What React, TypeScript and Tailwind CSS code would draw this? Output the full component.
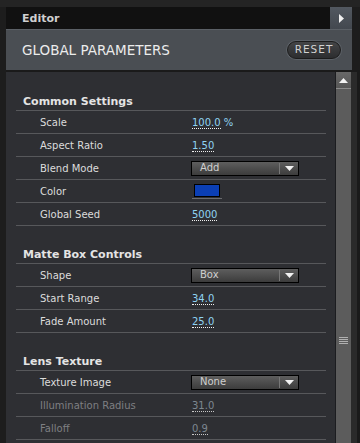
import React from "react";

const font = { fontFamily: '"DejaVu Sans", Verdana, sans-serif' };

function Val({ v, unit, dim }: { v: string; unit?: string; dim?: boolean }) {
  return (
    <span className={dim ? "text-[#7d8790]" : "text-[#8fd3f2]"}>
      <span className={`border-b border-dotted leading-[11px] inline-block ${dim ? "border-[#c8c8c8]" : "border-[#f0f0f0]"}`}>{v}</span>
      {unit ? <span> {unit}</span> : null}
    </span>
  );
}

function Drop({ label }: { label: string }) {
  return (
    <div className="ml-[-1px] w-[108px] h-[15px] border border-black bg-gradient-to-b from-[#5e5e5e] to-[#3c3c3c] flex items-center">
      <span className="flex-1 pl-[8px] text-[#cfcfcf] text-[10px] leading-none">{label}</span>
      <div className="w-px h-[11px] bg-[#1a1a1a] border-r border-[#777]" />
      <div className="w-[18px] flex justify-center">
        <svg width="9" height="5" viewBox="0 0 9 5"><path d="M0 0H9L4.5 5Z" fill="#f2f2f2" /></svg>
      </div>
    </div>
  );
}

function Row({ label, children, dim }: { label: string; children: React.ReactNode; dim?: boolean }) {
  return (
    <div className="h-[23px] flex items-center border-b border-[#57585b] text-[10px]">
      <div className={`w-[176px] pl-[24px] ${dim ? "text-[#7e7f82]" : "text-[#dcdcdc]"}`}>{label}</div>
      <div className="flex items-center">{children}</div>
    </div>
  );
}

function Heading({ title }: { title: string }) {
  return (
    <div className="h-[38px] flex items-end pb-[3px] pl-[7px] border-b border-[#57585b]">
      <span className="text-[11px] font-bold text-[#e4e4e4] leading-none">{title}</span>
    </div>
  );
}

export default function App() {
  return (
    <div className="w-[360px] h-[443px] bg-[#1d1d1d] overflow-hidden flex flex-col" style={font}>
      <div className="h-[7px] bg-[#242424]" />
      <div className="h-[22px] flex ml-[6px] mr-[8px]">
        <div className="flex-1 bg-[#111111] flex items-center pl-[16px] pt-[2px]">
          <span className="text-[11px] font-bold text-[#cfcfcf]">Editor</span>
        </div>
        <div className="w-[22px] bg-gradient-to-b from-[#525860] to-[#43484f] flex items-center justify-center">
          <svg width="5" height="9" viewBox="0 0 5 9"><path d="M0 0L5 4.5L0 9Z" fill="#f0f0f0" /></svg>
        </div>
      </div>
      <div className="h-[41px] ml-[6px] mr-[8px] bg-[#4a4e53] border-t border-[#5b6066] flex items-center justify-between pl-[16px] pr-[10px]">
        <span className="text-[13.5px] text-[#ececec]">GLOBAL PARAMETERS</span>
        <div className="rounded-full p-px bg-[#5c6167]">
          <div className="rounded-full w-[54px] h-[18px] bg-gradient-to-b from-[#444547] to-[#2c2d2f] border border-[#1c1c1c] flex items-center justify-center text-[10.5px] tracking-[1px] text-[#d2d2d2]">
            RESET
          </div>
        </div>
      </div>
      <div className="h-[2px] bg-[#1a1a1a] ml-[6px]" />
      <div className="flex flex-1 ml-[6px] min-h-0">
        <div className="flex-1 bg-[#2e2f33] pt-px pl-[10px] pr-[9px] border-r border-[#1c1d20]">
          <Heading title="Common Settings" />
          <Row label="Scale"><Val v="100.0" unit="%" /></Row>
          <Row label="Aspect Ratio"><Val v="1.50" /></Row>
          <Row label="Blend Mode"><Drop label="Add" /></Row>
          <Row label="Color">
            <div className="flex flex-col items-center">
              <div className="w-[26px] h-[13px] border border-black bg-[#0b3fb5]" />
              <div className="w-[30px] h-px bg-[#6a6b6e] mt-[1px]" />
            </div>
          </Row>
          <Row label="Global Seed"><Val v="5000" /></Row>
          <Heading title="Matte Box Controls" />
          <Row label="Shape"><Drop label="Box" /></Row>
          <Row label="Start Range"><Val v="34.0" /></Row>
          <Row label="Fade Amount"><Val v="25.0" /></Row>
          <Heading title="Lens Texture" />
          <Row label="Texture Image"><Drop label="None" /></Row>
          <Row label="Illumination Radius" dim><Val v="31.0" dim /></Row>
          <Row label="Falloff" dim><Val v="0.9" dim /></Row>
        </div>
        <div className="w-[15px] flex flex-col bg-[#5c5c5c]">
          <div className="h-[17px] bg-gradient-to-b from-[#686868] to-[#575757] border-b border-[#8c8c8c] flex items-center justify-center">
            <svg width="9" height="5" viewBox="0 0 9 5"><path d="M0 5H9L4.5 0Z" fill="#f4f4f4" /></svg>
          </div>
          <div className="h-[248px]" />
          <div className="flex flex-col items-center gap-[1px]">
            <div className="w-[9px] h-px bg-[#b0b0b0]" />
            <div className="w-[9px] h-px bg-[#b0b0b0]" />
            <div className="w-[9px] h-px bg-[#b0b0b0]" />
            <div className="w-[9px] h-px bg-[#b0b0b0]" />
          </div>
        </div>
        <div className="w-[6px] bg-[#2a2a2a]" />
        <div className="w-[3px] bg-[#1a1a1a]" />
      </div>
    </div>
  );
}
